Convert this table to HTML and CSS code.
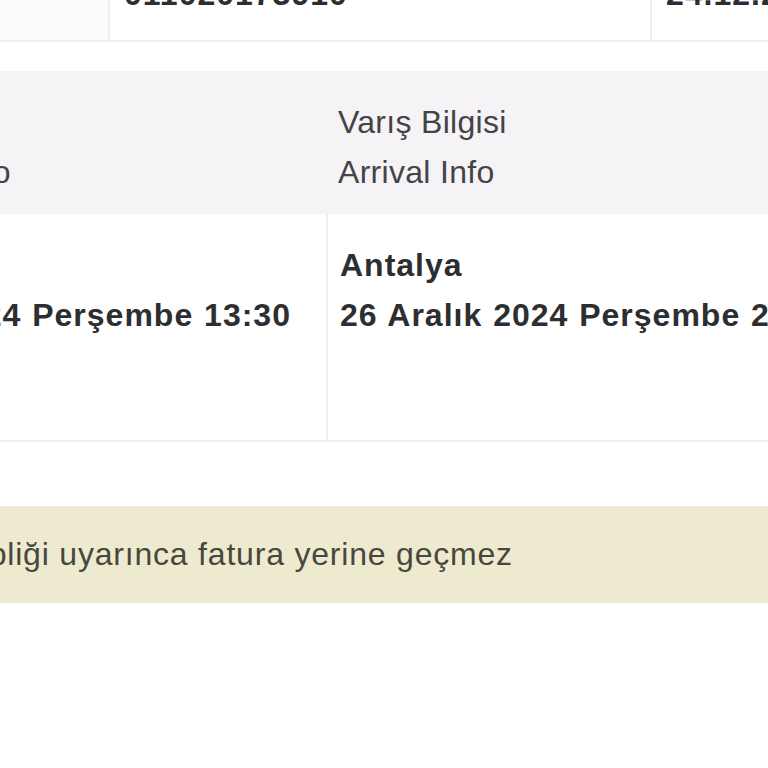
FILE: index.html
```html
<!DOCTYPE html>
<html lang="tr">
<head>
<meta charset="utf-8">
<title>Bilet</title>
<link rel="stylesheet" href="styles.css">
</head>
<body>
<div class="page">
  <div class="info-row">
    <div class="cell cell-a"></div>
    <div class="cell cell-b"><span class="strong">011020173910</span></div>
    <div class="cell cell-c"><span class="strong">24.12.2024 10:15</span></div>
  </div>

  <div class="trip">
    <div class="trip-head">
      <div class="th th-spacer">Sefer Bilgisi<br>Trip Info</div>
      <div class="th th-depart">Kalkış Bilgisi<br>Departure Info</div>
      <div class="th">Varış Bilgisi<br>Arrival Info</div>
    </div>
    <div class="trip-body">
      <div class="td td-spacer"></div>
      <div class="td"><span class="strong">Bursa</span><br><span class="strong">26 Aralık 2024 Perşembe 13:30</span></div>
      <div class="td"><span class="strong">Antalya</span><br><span class="strong">26 Aralık 2024 Perşembe 21:30</span></div>
    </div>
  </div>

  <div class="note">Bu belge Vergi Usul Kanunu Genel Tebliği uyarınca fatura yerine geçmez</div>
</div>
</body>
</html>
```

FILE: styles.css
```css
html, body {
  margin: 0;
  padding: 0;
  overflow: hidden;
  background: #ffffff;
}

body {
  font-family: "Liberation Sans", Arial, sans-serif;
  font-size: 32px;
  line-height: 50px;
  color: #3f3f3f;
}

.page {
  width: 1500px;
  margin-left: -600px;
  margin-top: -37px;
}

.strong {
  font-weight: bold;
  color: #2c2e30;
  letter-spacing: 1px;
  word-spacing: 1px;
  white-space: nowrap;
}

.info-row {
  display: grid;
  grid-template-columns: 710px 542px 1fr;
  border-bottom: 2px solid #efefef;
}

.cell {
  padding: 6px 14px 21px 14px;
  white-space: nowrap;
  overflow: hidden;
}

.cell-a {
  background: #fbfbfb;
  border-right: 2px solid #efefef;
}

.cell-b {
  border-right: 2px solid #efefef;
}

.trip {
  margin-top: 29px;
}

.trip-head {
  display: grid;
  grid-template-columns: 379px 547px 1fr;
  background: #f6f3f6;
  padding: 26px 0 17px 0;
  color: #444446;
  letter-spacing: 0.3px;
}

.th {
  padding: 0 12px;
  white-space: nowrap;
}

.th-depart {
  padding-left: 23px;
}

.th-spacer {
  visibility: hidden;
}

.trip-body {
  display: grid;
  grid-template-columns: 379px 547px 1fr;
  border-bottom: 2px solid #f0f0f0;
}

.td {
  padding: 26px 12px 100px 12px;
  white-space: nowrap;
  overflow: hidden;
  border-left: 2px solid #f0f0f0;
}

.td-spacer {
  border-left: none;
}

.note {
  margin-top: 64px;
  background: #eeead0;
  color: #48473c;
  padding: 23px 0 24px 24px;
  letter-spacing: 0.8px;
  white-space: nowrap;
}
```
